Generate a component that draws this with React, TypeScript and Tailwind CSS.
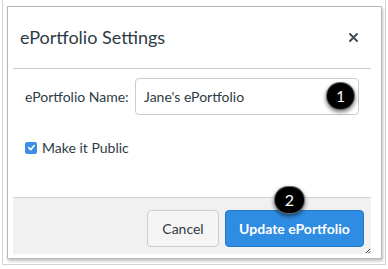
export default function App() {
    return (
        <div className="w-[388px] h-[269px] bg-white overflow-hidden" style={{ fontFamily: 'Lato, "Open Sans", sans-serif' }}>
            <div className="mx-[2px] h-[265px] border-x border-b border-[#d4d4d4] pt-[6px] pl-[4px]">
                <div className="relative w-[375px] h-[253px] border border-[#b9b9b9] bg-white shadow-[1px_2px_3px_rgba(0,0,0,0.25)] flex flex-col">
                    <div className="h-[61px] flex items-center justify-between pl-[12px] pr-[23px]">
                        <h2 className="text-[18px] text-[#2d3b45]">ePortfolio Settings</h2>
                        <svg width="9" height="9" viewBox="0 0 9 9">
                            <path d="M1 1 L8 8 M8 1 L1 8" stroke="#3d4a53" strokeWidth="1.9" strokeLinecap="round" />
                        </svg>
                    </div>
                    <div className="ml-[5px] mr-[10px] flex-1 flex flex-col border-t border-[#c7cdd1]">
                        <div className="flex-1 pl-[12px] pt-[9px]">
                            <div className="flex items-start">
                                <label className="w-[110px] pt-[8px] text-[14px] text-[#2d3b45]">ePortfolio Name:</label>
                                <div className="w-[224px] h-[37px] border border-[#c7cdd1] rounded-[4px] flex items-center px-[8px] text-[14px] text-[#2d3b45]">Jane's ePortfolio</div>
                            </div>
                            <div className="flex items-center gap-[5px] mt-[22px]">
                                <span className="w-[12px] h-[12px] rounded-[2px] bg-[#3b8de6] flex items-center justify-center">
                                    <svg width="9" height="9" viewBox="0 0 10 10">
                                        <path d="M2 5.2 L4.2 7.4 L8 2.8" fill="none" stroke="white" strokeWidth="1.8" strokeLinecap="round" strokeLinejoin="round" />
                                    </svg>
                                </span>
                                <span className="text-[14px] text-[#2d3b45]">Make it Public</span>
                            </div>
                        </div>
                        <div className="relative h-[57px] border-t border-[#cfd2d4] bg-[#f1f1f1] flex justify-end items-start pt-[12px] pr-[7px] gap-[6px] mb-[4px]">
                            <button className="h-[37px] w-[72px] rounded-[4px] border border-[#c7cdd1] bg-[#f5f5f5] text-[14px] text-[#2d3b45]">Cancel</button>
                            <button className="h-[37px] w-[139px] rounded-[4px] border border-[#2378c9] bg-[#2e8ce3] text-[14px] font-bold text-white">Update ePortfolio</button>
                            <svg className="absolute right-[0px] bottom-[0px]" width="6" height="6" viewBox="0 0 6 6">
                                <path d="M1 5 L5 1 M3.5 5 L5 3.5" stroke="#333" strokeWidth="0.9" />
                            </svg>
                        </div>
                    </div>
                    <div className="absolute left-[318px] top-[75px] w-[29px] h-[28px] rounded-full bg-black text-white text-[15px] flex items-center justify-center shadow-[0_2px_4px_rgba(0,0,0,0.55)] border border-white/40">1</div>
                    <div className="absolute left-[266px] top-[179px] w-[31px] h-[28px] rounded-full bg-black text-white text-[16px] flex items-center justify-center shadow-[0_2px_4px_rgba(0,0,0,0.55)] border border-white/40">2</div>
                </div>
            </div>
        </div>
    )
}
